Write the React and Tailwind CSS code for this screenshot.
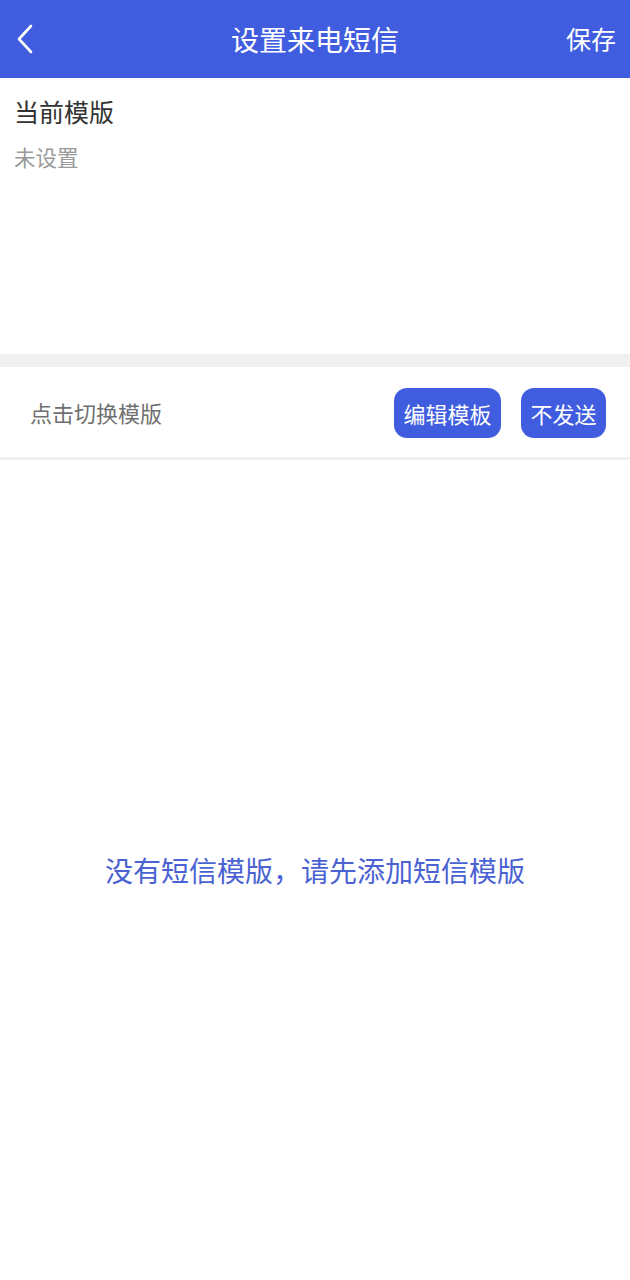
import React from "react";

const font = { fontFamily: '"Noto Sans CJK SC", "Noto Sans", sans-serif' };

export default function App() {
  return (
    <div className="flex min-h-screen w-full flex-col bg-white" style={font}>
      {/* Header */}
      <div className="relative flex h-[78px] items-center justify-center bg-[#405de0]">
        <button className="absolute left-[14px] top-[24px] flex h-[30px] w-[22px] items-center justify-center">
          <svg width="18" height="30" viewBox="0 0 18 30" fill="none">
            <path d="M15 2 L3 15 L15 28" stroke="white" strokeWidth="2.6" strokeLinecap="round" strokeLinejoin="round" />
          </svg>
        </button>
        <div className="text-[28px] leading-none text-white">设置来电短信</div>
        <div className="absolute right-[14px] top-[26px] text-[25px] leading-none text-white">保存</div>
      </div>

      {/* Current template */}
      <div className="flex h-[276px] flex-col px-[14px] pt-[18px]">
        <div className="text-[25px] leading-[30px] text-[#333333]">当前模版</div>
        <div className="mt-[18px] text-[21.5px] leading-[26px] text-[#9a9a9a]">未设置</div>
      </div>

      <div className="h-[13px] bg-[#f0f0f0]" />

      {/* Switch row */}
      <div className="flex h-[90px] items-center pl-[30px] pr-[24px]">
        <div className="flex-1 text-[22px] text-[#707070]">点击切换模版</div>
        <button className="mt-[2px] h-[50px] w-[107px] rounded-[13px] bg-[#405de0] text-[22px] text-white">编辑模板</button>
        <button className="ml-[20px] mt-[2px] h-[50px] w-[85px] rounded-[13px] bg-[#405de0] text-[22px] text-white">不发送</button>
      </div>
      <div className="h-[3px] bg-[#f0f0f0]" />

      {/* Empty state */}
      <div className="flex flex-1 items-center justify-center">
        <div className="text-[28px] text-[#4a62d2]">没有短信模版，请先添加短信模版</div>
      </div>
    </div>
  );
}
